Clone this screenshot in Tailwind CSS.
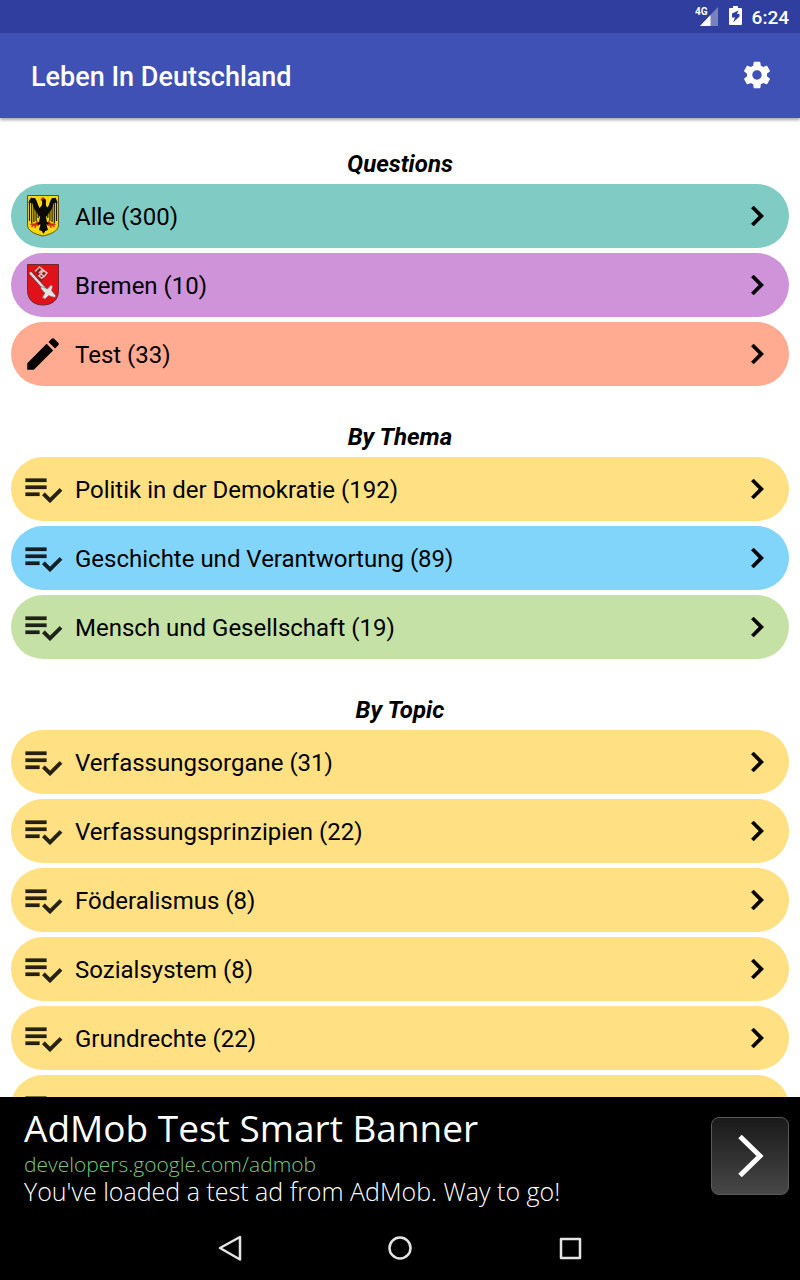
<!DOCTYPE html>
<html lang="de">
<head>
<meta charset="utf-8">
<meta name="viewport" content="width=device-width, initial-scale=1">
<title>Leben In Deutschland</title>
<script src="https://cdn.jsdelivr.net/npm/@tailwindcss/browser@4"></script>
</head>
<body class="flex h-screen flex-col overflow-hidden bg-white font-['Roboto',sans-serif] text-black">

<svg class="hidden" aria-hidden="true">
  <symbol id="chevron" viewBox="0 0 24 24"><path d="M10 6 8.590 7.410 13.170 12l-4.580 4.590L10 18l6-6z" stroke="currentColor" stroke-width=".3"/></symbol>
  <symbol id="list-check" viewBox="0 0 24 24"><path d="M14 10H2v2h12v-2zm0-4H2v2h12V6zM2 16h8v-2H2v2zm19.500-4.500L23 13l-6.990 7-4.510-4.500L13 14l3.010 3 5.490-5.500z" fill-opacity=".85" stroke="currentColor" stroke-opacity=".25" stroke-width=".4"/></symbol>
</svg>

<div class="flex h-[33px] shrink-0 items-center justify-end bg-[#303f9f] pr-[11px] text-white">
  <svg class="h-[33px] w-6" viewBox="0 0 24 33" role="img" aria-label="4G">
    <path d="M23 7v19H5z" fill="#fff" fill-opacity=".35"/>
    <path d="M0 4h12v12H0z" fill="#303f9f"/>
    <path d="M15.500 15v11H5z" fill="#fff"/>
    <text x="0" y="15" font-size="10" font-weight="700" font-family="Roboto" fill="#fff">4G</text>
  </svg>
  <svg class="ml-[10px] h-[33px] w-[13px]" viewBox="0 0 13 33" role="img" aria-label="Charging">
    <path d="M4 6h5v2h3a1 1 0 0 1 1 1v15a1 1 0 0 1-1 1H1a1 1 0 0 1-1-1V9a1 1 0 0 1 1-1h3z" fill="#fff"/>
    <path d="m9.500 10.500-6.500 3v4h3l-2 5 6.500-6v-2.500H8z" fill="#303f9f"/>
  </svg>
  <time class="ml-[10px] pt-0.5 text-[19px] leading-6 font-medium">6:24</time>
</div>

<header class="z-10 flex h-[85px] shrink-0 items-center justify-between bg-[#3f51b5] pr-[27px] pl-[31px] text-white shadow-[0_2px_3px_rgba(0,0,0,0.35)]">
  <h1 class="pt-0.5 text-[27px] leading-8 font-medium">Leben In Deutschland</h1>
  <button type="button" aria-label="Settings" class="mb-0.5">
    <svg class="size-8" viewBox="0 0 24 24" fill="currentColor"><path d="M19.430 12.980c.04-.32.07-.64.07-.98s-.03-.66-.07-.98l2.110-1.650c.19-.15.24-.42.12-.64l-2-3.460c-.12-.22-.39-.3-.61-.22l-2.490 1c-.52-.4-1.080-.73-1.690-.98l-.38-2.650C14.460 2.180 14.250 2 14 2h-4c-.25 0-.46.18-.49.42l-.38 2.650c-.61.25-1.170.59-1.690.98l-2.490-1c-.23-.09-.49 0-.61.22l-2 3.460c-.13.22-.07.49.12.64l2.110 1.650c-.04.32-.07.65-.07.98s.03.66.07.98l-2.110 1.650c-.19.15-.24.42-.12.64l2 3.460c.12.22.39.3.61.22l2.490-1c.52.4 1.080.73 1.690.98l.38 2.650c.03.24.24.42.49.42h4c.25 0 .46-.18.49-.42l.38-2.650c.61-.25 1.170-.59 1.690-.98l2.490 1c.23.09.49 0 .61-.22l2-3.460c.12-.22.07-.49-.12-.64l-2.110-1.650zM12 15.500c-1.930 0-3.500-1.570-3.500-3.500s1.570-3.500 3.500-3.500 3.500 1.570 3.500 3.500-1.570 3.500-3.500 3.500z"/></svg>
  </button>
</header>

<main class="min-h-0 flex-1 overflow-hidden px-[11px] text-2xl leading-8">
  <section>
    <h2 class="pt-[30px] pb-1 text-center font-bold italic">Questions</h2>
    <div class="flex flex-col gap-[5px]">
      <button type="button" class="flex h-16 items-center gap-[11px] rounded-full bg-[#80cbc4] pr-3 pl-[11px] text-left">
        <svg class="size-[42px]" viewBox="0 0 42 42">
          <path d="M5.500.5h31v29.500c0 5-5 8.500-15.500 11C10.500 38.500 5.500 35 5.500 30z" fill="#f8d90f" stroke="#5f5510"/>
          <path d="M7.500 6v20M9.700 6v22.500M11.900 7v20M14.100 9v17M16.200 12v11M34.500 6v20M32.300 6v22.500M30.100 7v20M27.900 9v17M25.800 12v11" stroke="#1c1804" stroke-width="1.200"/>
          <path d="M6.500 8C7 5.500 8 3.500 9.500 2.500c1.500 1.200 2 .2 3.500.5 2.500 3 2.500 7 4.500 10l2-2c1-2 .8-4 .3-5.500.5-2.200 3-2.700 4-.5.8 2.200-.5 3.500.2 5.500l1.500 2.500c2-3 2-7 4.500-10 1.300-.3 2 .7 3.500-.5C34 3.500 35 5.500 35.500 8c-1.500-.5-2.500-.5-4 .5-1 4-2 6.500-4.500 9.500L24 22l1 5 4.500 1.500-1 2-4-1 1.500 5.500-2.800 1-1.700 3-1.700-3-2.800-1 1.500-5.500-4 1-1-2L17 27l1-5-3-4c-2.500-3-3.500-5.500-4.500-9.500-1.500-1-2.500-1-4-.5z" fill="#0b0a08"/>
          <path d="M18.500 5c.3-2 2-3 3.700-2.500L21.700 4l-1.700 1 .5 1.500z" fill="#d9261c"/>
          <path d="m15.500 26-2 3-5 .5m5-.5-4 3m4-3-.5 4m.5-4 3 1.500M26.500 26l2 3 5 .5m-5-.5 4 3m-4-3 .5 4m-.5-4-3 1.500" fill="none" stroke="#cf2c1c" stroke-width="1.400"/>
        </svg>
        <span class="flex-1 pt-0.5">Alle (300)</span>
        <svg class="size-10"><use href="#chevron"/></svg>
      </button>
      <button type="button" class="flex h-16 items-center gap-[11px] rounded-full bg-[#ce93d8] pr-3 pl-[11px] text-left">
        <svg class="size-[42px]" viewBox="0 0 42 42">
          <path d="M5.500.5h31v26c0 9-6 14.500-15.500 14.500S5.500 35.500 5.500 26.500z" fill="#e01119" stroke="#6d2a2c"/>
          <path d="m8 8.500 18 20" stroke="#6b3a3a" stroke-width="4"/>
          <path d="m8 8.500 18 20" stroke="#dcdcdc" stroke-width="2.600"/>
          <path d="m12 7.500 5-5 9 6.500-6.500 8.500-4-3.500 1.500-2z" fill="#8b1e20"/>
          <path d="m13 7.500 4.500-4.500 3 2.500-3.500 3.500m4-3 4 3-3 3.500-3.500-3m1.500 5-3-2.500 4.500-5.500m-2 8 2.500-2.500" fill="none" stroke="#e0bab5" stroke-width="1.600"/>
          <path d="m19 22.500 4 1.500 2.500 1 3.500-4 1.500 1.500-1 4 1.500 2 2.500 3-.5 2-3.500-1-3-1-3.500 3.500-2.500-1.500 2.500-4.500-2-2-2-2.500z" fill="#e4e4e4" stroke="#777" stroke-width=".6"/>
        </svg>
        <span class="flex-1 pt-0.5">Bremen (10)</span>
        <svg class="size-10"><use href="#chevron"/></svg>
      </button>
      <button type="button" class="flex h-16 items-center gap-[11px] rounded-full bg-[#ffab91] pr-3 pl-[11px] text-left">
        <svg class="size-[42px]" viewBox="0 0 24 24"><path d="M3 17.250V21h3.750L17.810 9.940l-3.750-3.750L3 17.250zM20.710 7.040c.39-.39.39-1.020 0-1.410l-2.340-2.340c-.39-.39-1.020-.39-1.410 0l-1.830 1.830 3.750 3.750 1.830-1.830z"/></svg>
        <span class="flex-1 pt-0.5">Test (33)</span>
        <svg class="size-10"><use href="#chevron"/></svg>
      </button>
    </div>
  </section>

  <section>
    <h2 class="pt-[35px] pb-1 text-center font-bold italic">By Thema</h2>
    <div class="flex flex-col gap-[5px]">
      <button type="button" class="flex h-16 items-center gap-[11px] rounded-full bg-[#ffe082] pr-3 pl-[11px] text-left"><svg class="size-[42px]"><use href="#list-check"/></svg><span class="flex-1 pt-0.5">Politik in der Demokratie (192)</span><svg class="size-10"><use href="#chevron"/></svg></button>
      <button type="button" class="flex h-16 items-center gap-[11px] rounded-full bg-[#81d4fa] pr-3 pl-[11px] text-left"><svg class="size-[42px]"><use href="#list-check"/></svg><span class="flex-1 pt-0.5">Geschichte und Verantwortung (89)</span><svg class="size-10"><use href="#chevron"/></svg></button>
      <button type="button" class="flex h-16 items-center gap-[11px] rounded-full bg-[#c5e1a5] pr-3 pl-[11px] text-left"><svg class="size-[42px]"><use href="#list-check"/></svg><span class="flex-1 pt-0.5">Mensch und Gesellschaft (19)</span><svg class="size-10"><use href="#chevron"/></svg></button>
    </div>
  </section>

  <section>
    <h2 class="pt-[35px] pb-1 text-center font-bold italic">By Topic</h2>
    <div class="flex flex-col gap-[5px]">
      <button type="button" class="flex h-16 items-center gap-[11px] rounded-full bg-[#ffe082] pr-3 pl-[11px] text-left"><svg class="size-[42px]"><use href="#list-check"/></svg><span class="flex-1 pt-0.5">Verfassungsorgane (31)</span><svg class="size-10"><use href="#chevron"/></svg></button>
      <button type="button" class="flex h-16 items-center gap-[11px] rounded-full bg-[#ffe082] pr-3 pl-[11px] text-left"><svg class="size-[42px]"><use href="#list-check"/></svg><span class="flex-1 pt-0.5">Verfassungsprinzipien (22)</span><svg class="size-10"><use href="#chevron"/></svg></button>
      <button type="button" class="flex h-16 items-center gap-[11px] rounded-full bg-[#ffe082] pr-3 pl-[11px] text-left"><svg class="size-[42px]"><use href="#list-check"/></svg><span class="flex-1 pt-0.5">Föderalismus (8)</span><svg class="size-10"><use href="#chevron"/></svg></button>
      <button type="button" class="flex h-16 items-center gap-[11px] rounded-full bg-[#ffe082] pr-3 pl-[11px] text-left"><svg class="size-[42px]"><use href="#list-check"/></svg><span class="flex-1 pt-0.5">Sozialsystem (8)</span><svg class="size-10"><use href="#chevron"/></svg></button>
      <button type="button" class="flex h-16 items-center gap-[11px] rounded-full bg-[#ffe082] pr-3 pl-[11px] text-left"><svg class="size-[42px]"><use href="#list-check"/></svg><span class="flex-1 pt-0.5">Grundrechte (22)</span><svg class="size-10"><use href="#chevron"/></svg></button>
      <button type="button" class="flex h-16 items-center gap-[11px] rounded-full bg-[#ffe082] pr-3 pl-[11px] text-left"><svg class="size-[42px]"><use href="#list-check"/></svg><span class="flex-1 pt-0.5">Wahlen und Beteiligung (26)</span><svg class="size-10"><use href="#chevron"/></svg></button>
    </div>
  </section>
</main>

<aside class="flex h-[119px] shrink-0 items-center justify-between bg-black pr-[11px] pb-0.5 pl-6 font-['Open_Sans',sans-serif] text-white">
  <div class="pb-0.5">
    <p class="text-[37px] leading-[44px]">AdMob Test Smart Banner</p>
    <a href="#" class="block text-[21px] leading-7 font-light text-[#7bc67e]">developers.google.com/admob</a>
    <p class="text-[25px] leading-[26px] font-light">You've loaded a test ad from AdMob. Way to go!</p>
  </div>
  <button type="button" aria-label="Open ad" class="flex size-[78px] items-center justify-center rounded-lg border border-[#5a5a5a] bg-linear-to-b from-[#1a1a1a] to-[#484848]">
    <svg class="size-[50px]" viewBox="0 0 50 50" fill="none" stroke="#fff" stroke-width="5"><path d="m15 5.500 20 19.500-20 19.500"/></svg>
  </button>
</aside>

<nav class="flex h-16 shrink-0 items-center justify-center gap-[138px] bg-black text-[#e4e4e4]">
  <button type="button" aria-label="Back"><svg class="size-8" viewBox="0 0 32 32" fill="none" stroke="currentColor" stroke-width="2.500" stroke-linejoin="round"><path d="M26 5v22.500L6 16z"/></svg></button>
  <button type="button" aria-label="Home"><svg class="size-8" viewBox="0 0 32 32" fill="none" stroke="currentColor" stroke-width="2.500"><circle cx="16" cy="16" r="10.500"/></svg></button>
  <button type="button" aria-label="Recent apps"><svg class="size-8" viewBox="0 0 32 32" fill="none" stroke="currentColor" stroke-width="2.500" stroke-linejoin="round"><path d="M7 7h19v19H7z"/></svg></button>
</nav>
</body>
</html>
